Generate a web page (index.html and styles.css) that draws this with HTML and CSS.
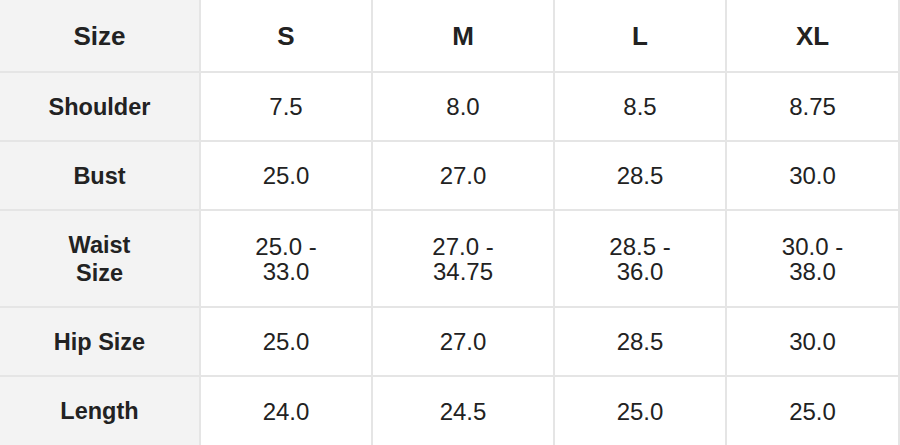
FILE: index.html
```html
<!DOCTYPE html>
<html lang="en">
<head>
<meta charset="utf-8">
<title>Size Chart</title>
<link rel="stylesheet" href="styles.css">
</head>
<body>
<div class="chart">
  <div class="cell label head">Size</div>
  <div class="cell head">S</div>
  <div class="cell head">M</div>
  <div class="cell head">L</div>
  <div class="cell head">XL</div>

  <div class="cell label">Shoulder</div>
  <div class="cell">7.5</div>
  <div class="cell">8.0</div>
  <div class="cell">8.5</div>
  <div class="cell">8.75</div>

  <div class="cell label">Bust</div>
  <div class="cell">25.0</div>
  <div class="cell">27.0</div>
  <div class="cell">28.5</div>
  <div class="cell">30.0</div>

  <div class="cell label">Waist<br>Size</div>
  <div class="cell">25.0 -<br>33.0</div>
  <div class="cell">27.0 -<br>34.75</div>
  <div class="cell">28.5 -<br>36.0</div>
  <div class="cell">30.0 -<br>38.0</div>

  <div class="cell label">Hip Size</div>
  <div class="cell">25.0</div>
  <div class="cell">27.0</div>
  <div class="cell">28.5</div>
  <div class="cell">30.0</div>

  <div class="cell label">Length</div>
  <div class="cell">24.0</div>
  <div class="cell">24.5</div>
  <div class="cell">25.0</div>
  <div class="cell">25.0</div>
</div>
</body>
</html>
```

FILE: styles.css
```css
html, body {
  margin: 0;
  padding: 0;
  background: #ffffff;
}

body {
  font-family: "Liberation Sans", Arial, Helvetica, sans-serif;
  color: #222222;
}

.chart {
  width: 900px;
  height: 445px;
  box-sizing: border-box;
  display: grid;
  grid-template-columns: 199px 170px 180px 170px 171px;
  grid-template-rows: 71px 67px 67px 95px 67px 68px;
  gap: 2px;
  padding: 0 2px 0 0;
  background: #e5e5e5;
}

.cell {
  display: flex;
  align-items: center;
  justify-content: center;
  text-align: center;
  background: #ffffff;
  font-size: 24px;
  line-height: 25px;
}

.label {
  background: #f3f3f3;
  font-weight: bold;
  font-size: 23.5px;
  line-height: 28px;
}

.head {
  font-weight: bold;
  font-size: 26px;
  line-height: 30px;
}
```
